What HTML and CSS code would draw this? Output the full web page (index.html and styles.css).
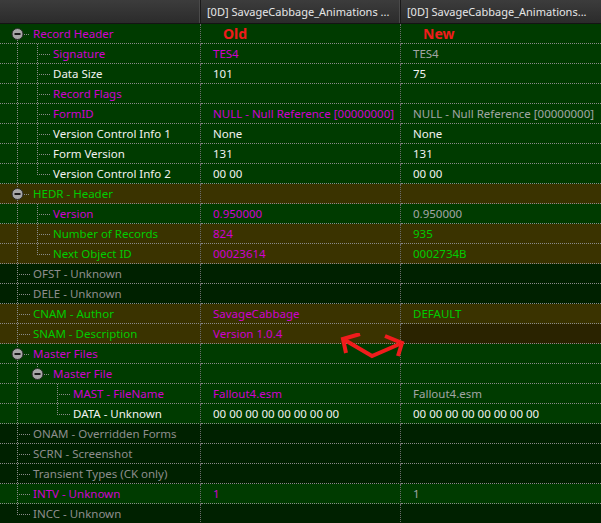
FILE: index.html
```html
<!DOCTYPE html>
<html lang="en">
<head>
    <meta charset="UTF-8">
    <title>Record compare</title>
    <link rel="stylesheet" href="styles.css">
</head>
<body>
    <div class="view">
        <div class="head">
            <div class="hcell"></div>
            <div class="hcell">[0D] SavageCabbage_Animations ...</div>
            <div class="hcell">[0D] SavageCabbage_Animations...</div>
        </div>

        <!-- Record Header -->
        <div class="row green">
            <div class="cell tree"><svg class="xp" width="26" height="19"><line class="dl" x1="10.5" y1="16" x2="10.5" y2="19"/><line class="dl" x1="17" y1="10.5" x2="23" y2="10.5"/><circle class="knob" cx="10.5" cy="10" r="5.5"/><line class="minus" x1="7.5" y1="10" x2="13.5" y2="10"/></svg><span class="mag">Record Header</span></div>
            <div class="cell"><span class="tag">Old</span></div>
            <div class="cell"><span class="tag">New</span></div>
        </div>
        <div class="row green">
            <div class="cell tree"><span class="ind v"></span><span class="cn tee"></span><span class="mag">Signature</span></div>
            <div class="cell mag">TES4</div>
            <div class="cell gray">TES4</div>
        </div>
        <div class="row green">
            <div class="cell tree"><span class="ind v"></span><span class="cn tee"></span><span class="wht">Data Size</span></div>
            <div class="cell wht">101</div>
            <div class="cell wht">75</div>
        </div>
        <div class="row green">
            <div class="cell tree"><span class="ind v"></span><span class="cn tee"></span><span class="mag">Record Flags</span></div>
            <div class="cell"></div>
            <div class="cell"></div>
        </div>
        <div class="row green">
            <div class="cell tree"><span class="ind v"></span><span class="cn tee"></span><span class="mag">FormID</span></div>
            <div class="cell mag">NULL - Null Reference [00000000]</div>
            <div class="cell gray">NULL - Null Reference [00000000]</div>
        </div>
        <div class="row green">
            <div class="cell tree"><span class="ind v"></span><span class="cn tee"></span><span class="wht">Version Control Info 1</span></div>
            <div class="cell wht">None</div>
            <div class="cell wht">None</div>
        </div>
        <div class="row green">
            <div class="cell tree"><span class="ind v"></span><span class="cn tee"></span><span class="wht">Form Version</span></div>
            <div class="cell wht">131</div>
            <div class="cell wht">131</div>
        </div>
        <div class="row green">
            <div class="cell tree"><span class="ind v"></span><span class="cn end"></span><span class="wht">Version Control Info 2</span></div>
            <div class="cell wht">00 00</div>
            <div class="cell wht">00 00</div>
        </div>

        <!-- HEDR -->
        <div class="row olive">
            <div class="cell tree"><svg class="xp" width="26" height="19"><line class="dl" x1="10.5" y1="0" x2="10.5" y2="19"/><line class="dl" x1="17" y1="10.5" x2="23" y2="10.5"/><circle class="knob" cx="10.5" cy="10" r="5.5"/><line class="minus" x1="7.5" y1="10" x2="13.5" y2="10"/></svg><span class="grn">HEDR - Header</span></div>
            <div class="cell"></div>
            <div class="cell"></div>
        </div>
        <div class="row green">
            <div class="cell tree"><span class="ind v"></span><span class="cn tee"></span><span class="mag">Version</span></div>
            <div class="cell mag">0.950000</div>
            <div class="cell gray">0.950000</div>
        </div>
        <div class="row olive">
            <div class="cell tree"><span class="ind v"></span><span class="cn tee"></span><span class="grn">Number of Records</span></div>
            <div class="cell mag">824</div>
            <div class="cell grn">935</div>
        </div>
        <div class="row olive">
            <div class="cell tree"><span class="ind v"></span><span class="cn end"></span><span class="grn">Next Object ID</span></div>
            <div class="cell mag">00023614</div>
            <div class="cell grn">0002734B</div>
        </div>

        <div class="row dark">
            <div class="cell tree"><span class="cn tee"></span><span class="dim">OFST - Unknown</span></div>
            <div class="cell"></div>
            <div class="cell"></div>
        </div>
        <div class="row dark">
            <div class="cell tree"><span class="cn tee"></span><span class="dim">DELE - Unknown</span></div>
            <div class="cell"></div>
            <div class="cell"></div>
        </div>
        <div class="row olive">
            <div class="cell tree"><span class="cn tee"></span><span class="grn">CNAM - Author</span></div>
            <div class="cell mag">SavageCabbage</div>
            <div class="cell grn">DEFAULT</div>
        </div>
        <div class="row olive">
            <div class="cell tree"><span class="cn tee"></span><span class="grn">SNAM - Description</span></div>
            <div class="cell mag">Version 1.0.4</div>
            <div class="cell missing"></div>
        </div>

        <!-- Master Files -->
        <div class="row green">
            <div class="cell tree"><svg class="xp" width="26" height="19"><line class="dl" x1="10.5" y1="0" x2="10.5" y2="19"/><line class="dl" x1="17" y1="10.5" x2="23" y2="10.5"/><circle class="knob" cx="10.5" cy="10" r="5.5"/><line class="minus" x1="7.5" y1="10" x2="13.5" y2="10"/></svg><span class="mag">Master Files</span></div>
            <div class="cell"></div>
            <div class="cell"></div>
        </div>
        <div class="row green">
            <div class="cell tree"><span class="ind v"></span><svg class="xp" width="26" height="19"><line class="dl" x1="10.5" y1="0" x2="10.5" y2="4"/><line class="dl" x1="17" y1="10.5" x2="23" y2="10.5"/><circle class="knob" cx="10.5" cy="10" r="5.5"/><line class="minus" x1="7.5" y1="10" x2="13.5" y2="10"/></svg><span class="mag">Master File</span></div>
            <div class="cell"></div>
            <div class="cell"></div>
        </div>
        <div class="row green">
            <div class="cell tree"><span class="ind v"></span><span class="ind"></span><span class="cn tee"></span><span class="mag">MAST - FileName</span></div>
            <div class="cell mag">Fallout4.esm</div>
            <div class="cell gray">Fallout4.esm</div>
        </div>
        <div class="row green">
            <div class="cell tree"><span class="ind v"></span><span class="ind"></span><span class="cn end"></span><span class="wht">DATA - Unknown</span></div>
            <div class="cell wht">00 00 00 00 00 00 00 00</div>
            <div class="cell wht">00 00 00 00 00 00 00 00</div>
        </div>

        <div class="row dark">
            <div class="cell tree"><span class="cn tee"></span><span class="dim">ONAM - Overridden Forms</span></div>
            <div class="cell"></div>
            <div class="cell"></div>
        </div>
        <div class="row dark">
            <div class="cell tree"><span class="cn tee"></span><span class="dim">SCRN - Screenshot</span></div>
            <div class="cell"></div>
            <div class="cell"></div>
        </div>
        <div class="row dark">
            <div class="cell tree"><span class="cn tee"></span><span class="dim">Transient Types (CK only)</span></div>
            <div class="cell"></div>
            <div class="cell"></div>
        </div>
        <div class="row green">
            <div class="cell tree"><span class="cn tee"></span><span class="mag">INTV - Unknown</span></div>
            <div class="cell mag">1</div>
            <div class="cell gray">1</div>
        </div>
        <div class="row dark">
            <div class="cell tree"><span class="cn end"></span><span class="dim">INCC - Unknown</span></div>
            <div class="cell"></div>
            <div class="cell"></div>
        </div>

        <!-- hand drawn note over the grid -->
        <svg class="arrow" width="70" height="34" viewBox="0 0 70 34">
            <polyline points="3,6 32,23 62,10" />
            <polyline points="20,1 3,6 6,20" />
            <polyline points="45,3 62,10 58,23" />
        </svg>
    </div>
</body>
</html>
```

FILE: styles.css
```css
* {
    margin: 0;
    padding: 0;
    box-sizing: border-box;
}

body {
    background: #002100;
    font-family: 'Noto Sans', 'Segoe UI', sans-serif;
    font-size: 11.5px;
}

.view {
    position: relative;
    width: 601px;
}

.head {
    display: grid;
    grid-template-columns: 201px 200px 200px;
    height: 24px;
    background: linear-gradient(#3c3c3c, #2b2b2b);
    border-bottom: 1px solid #141414;
}

.hcell {
    color: #e6e6e6;
    font-size: 11px;
    line-height: 23px;
    padding-left: 6px;
    border-right: 1px solid #1a1a1a;
    box-shadow: inset -1px 0 0 #4a4a4a;
    white-space: nowrap;
}

.hcell:last-child {
    border-right: none;
    box-shadow: none;
}

.row {
    display: grid;
    grid-template-columns: 201px 200px 200px;
    height: 20px;
}

.green { background: #003b00; }
.olive { background: #3a3300; }
.dark  { background: #002100; }

.cell {
    line-height: 19px;
    padding-left: 12px;
    border-bottom: 1px dotted #8a8a8a;
    border-right: 1px dotted #6a6a6a;
    white-space: nowrap;
    overflow: hidden;
}

.cell:last-child {
    border-right: none;
}

.cell.missing {
    background: #2a2300;
}

.tree {
    display: flex;
    padding-left: 7px;
}

.ind {
    flex: none;
    width: 20px;
}

.ind.v {
    background: repeating-linear-gradient(to bottom, #8a8a8a 0 1px, transparent 1px 2px) no-repeat 10px 0 / 1px 100%;
}

.cn {
    flex: none;
    width: 26px;
    background-repeat: no-repeat;
    background-image:
        repeating-linear-gradient(to bottom, #8a8a8a 0 1px, transparent 1px 2px),
        repeating-linear-gradient(to right, #8a8a8a 0 1px, transparent 1px 2px);
    background-position: 10px 0, 10px 10px;
}

.cn.tee { background-size: 1px 100%, 13px 1px; }
.cn.end { background-size: 1px 10px, 13px 1px; }

.xp {
    flex: none;
    display: block;
}

.xp .dl {
    stroke: #8a8a8a;
    stroke-width: 1;
    stroke-dasharray: 1 1;
    shape-rendering: crispEdges;
}

.xp .knob {
    fill: #a8a8a8;
    stroke: #2c2c2c;
    stroke-width: 1;
}

.xp .minus {
    stroke: #1c1c1c;
    stroke-width: 2;
}

.mag  { color: #d000d0; }
.wht  { color: #f2f2f2; }
.grn  { color: #00cc00; }
.dim  { color: #8e8e8e; }
.gray { color: #a2a6a6; }

.tag {
    color: #f01c1c;
    font-weight: bold;
    font-size: 14px;
    margin-left: 10px;
}

.arrow {
    position: absolute;
    left: 340px;
    top: 333px;
}

.arrow polyline {
    fill: none;
    stroke: #f01c1c;
    stroke-width: 4;
    stroke-linejoin: miter;
}
```
